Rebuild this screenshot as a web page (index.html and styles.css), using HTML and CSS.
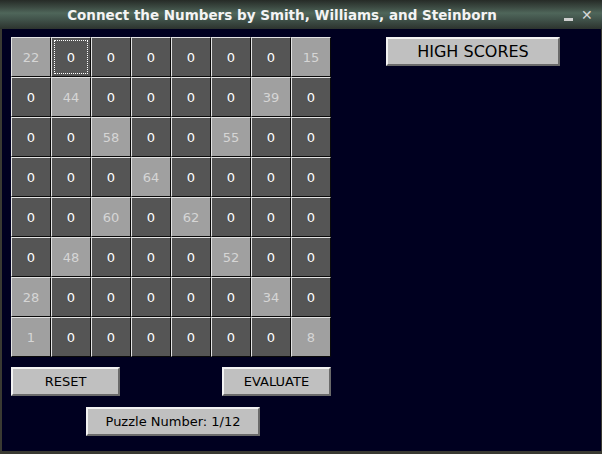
FILE: index.html
```html
<!DOCTYPE html>
<html>
<head>
<meta charset="utf-8">
<link rel="stylesheet" href="styles.css">
</head>
<body>
<div class="window">
  <div class="titlebar">
    <div class="title">Connect the Numbers by Smith, Williams, and Steinborn</div>
    <div class="controls"><span class="min"></span><span class="close">✕</span></div>
  </div>
  <div class="content">
    <div class="left">
      <div class="grid">
        <div class="cell given">22</div><div class="cell focus"><span>0</span></div><div class="cell">0</div><div class="cell">0</div><div class="cell">0</div><div class="cell">0</div><div class="cell">0</div><div class="cell given">15</div>
        <div class="cell">0</div><div class="cell given">44</div><div class="cell">0</div><div class="cell">0</div><div class="cell">0</div><div class="cell">0</div><div class="cell given">39</div><div class="cell">0</div>
        <div class="cell">0</div><div class="cell">0</div><div class="cell given">58</div><div class="cell">0</div><div class="cell">0</div><div class="cell given">55</div><div class="cell">0</div><div class="cell">0</div>
        <div class="cell">0</div><div class="cell">0</div><div class="cell">0</div><div class="cell given">64</div><div class="cell">0</div><div class="cell">0</div><div class="cell">0</div><div class="cell">0</div>
        <div class="cell">0</div><div class="cell">0</div><div class="cell given">60</div><div class="cell">0</div><div class="cell given">62</div><div class="cell">0</div><div class="cell">0</div><div class="cell">0</div>
        <div class="cell">0</div><div class="cell given">48</div><div class="cell">0</div><div class="cell">0</div><div class="cell">0</div><div class="cell given">52</div><div class="cell">0</div><div class="cell">0</div>
        <div class="cell given">28</div><div class="cell">0</div><div class="cell">0</div><div class="cell">0</div><div class="cell">0</div><div class="cell">0</div><div class="cell given">34</div><div class="cell">0</div>
        <div class="cell given">1</div><div class="cell">0</div><div class="cell">0</div><div class="cell">0</div><div class="cell">0</div><div class="cell">0</div><div class="cell">0</div><div class="cell given">8</div>
      </div>
      <div class="actions">
        <div class="btn small">RESET</div>
        <div class="btn small">EVALUATE</div>
      </div>
      <div class="btn puzzle">Puzzle Number: 1/12</div>
    </div>
    <div class="right">
      <div class="btn high">HIGH SCORES</div>
    </div>
  </div>
</div>
</body>
</html>
```
FILE: styles.css
```css
html, body {
  margin: 0;
  padding: 0;
  background: #000020;
}
.window {
  width: 602px;
  height: 454px;
  display: flex;
  flex-direction: column;
  background: #3a3a32;
  font-family: "DejaVu Sans", sans-serif;
  overflow: hidden;
}
.titlebar {
  height: 29px;
  flex: none;
  display: flex;
  align-items: center;
  background: linear-gradient(to bottom, #262b27 0%, #3c4a42 25%, #4f665a 45%, #3f5048 70%, #2c332e 100%);
}
.title {
  width: 564px;
  text-align: center;
  color: #f4f4f4;
  font-weight: bold;
  font-size: 13.5px;
  padding-top: 1px;
}
.controls {
  display: flex;
  align-items: center;
  gap: 8px;
  color: #d0d0d0;
}
.min {
  display: inline-block;
  width: 9px;
  height: 3px;
  background: #cfcfcf;
  margin-top: 9px;
}
.close {
  font-size: 14px;
  font-weight: bold;
  color: #d6d6d6;
}
.content {
  flex: 1;
  margin: 0 1px 3px 2px;
  background: #000020;
  display: flex;
  padding: 8px 0 0 9px;
  gap: 55px;
}
.left {
  width: 320px;
  display: flex;
  flex-direction: column;
}
.grid {
  display: grid;
  grid-template-columns: repeat(8, 40px);
  grid-template-rows: repeat(8, 40px);
}
.cell {
  box-sizing: border-box;
  border-top: 1px solid #e4e4e4;
  border-left: 1px solid #e4e4e4;
  border-right: 1px solid #0a0a0a;
  border-bottom: 1px solid #0a0a0a;
  background: #555555;
  color: #ffffff;
  font-size: 13px;
  display: flex;
  align-items: center;
  justify-content: center;
}
.cell.given {
  background: #a0a0a0;
  color: #d6d6d6;
}
.cell.focus {
  padding: 2px;
}
.cell.focus span {
  flex: 1;
  align-self: stretch;
  display: flex;
  align-items: center;
  justify-content: center;
  border: 1px dotted #ffffff;
}
.actions {
  display: flex;
  justify-content: space-between;
  margin-top: 10px;
}
.btn {
  box-sizing: border-box;
  height: 29px;
  background: #c0c0c0;
  border-top: 2px solid #f2f2f2;
  border-left: 2px solid #f2f2f2;
  border-right: 2px solid #6a6a6a;
  border-bottom: 2px solid #6a6a6a;
  color: #000000;
  font-size: 13px;
  display: flex;
  align-items: center;
  justify-content: center;
}
.btn.small {
  width: 109px;
}
.btn.puzzle {
  width: 174px;
  margin-top: 11px;
  margin-left: 75px;
}
.right {
  display: flex;
  flex-direction: column;
}
.btn.high {
  width: 174px;
  font-size: 16px;
}
```
